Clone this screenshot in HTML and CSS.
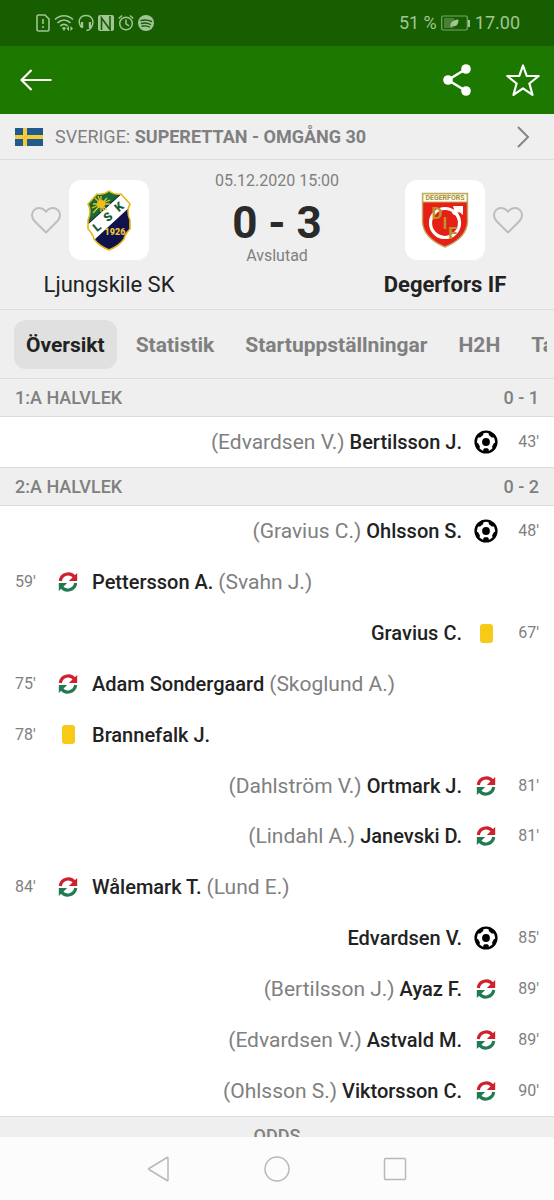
FILE: index.html
```html
<!DOCTYPE html>
<html lang="sv">
<head>
    <meta charset="UTF-8">
    <meta name="viewport" content="width=device-width, initial-scale=1.0">
    <title>Ljungskile SK - Degerfors IF</title>
    <link rel="stylesheet" href="styles.css">
</head>
<body>
    <!-- Shared icons -->
    <svg class="sprite" aria-hidden="true">
        <symbol id="ball" viewBox="0 0 24 24">
            <circle cx="12" cy="12" r="10.4" fill="#fff" stroke="#000" stroke-width="2.4"/>
            <circle cx="12" cy="12" r="3.900"/>
            <path d="M9 22.500l.3-3.300 1.200-1h3l1.200 1 .3 3.300z"/>
            <path d="M4.500 4.500L9.500 1.800 9.200 5 6.200 7.500 3 7.500zM19.500 4.500L14.500 1.800 14.800 5 17.800 7.500 21 7.500z"/>
            <path d="M1.500 12l2.600 1.200 1.800 3.400L5.400 19 2.500 17zM22.500 12l-2.600 1.200-1.800 3.400.5 2.400 2.900-2z"/>
        </symbol>
        <symbol id="swap" viewBox="0 0 24 24">
            <path d="M4.300 11A8 8 0 0 1 18.600 7.200" fill="none" stroke="#d0202e" stroke-width="3.200"/>
            <path d="M21.200 3v8h-8.400z" fill="#d0202e"/>
            <path d="M19.700 13A8 8 0 0 1 5.400 16.800" fill="none" stroke="#217a51" stroke-width="3.200"/>
            <path d="M2.800 21v-8h8.400z" fill="#217a51"/>
        </symbol>
        <symbol id="heart" viewBox="0 0 32 30">
            <path d="M16 27.500L4.700 16.300C1.200 12.600 1.200 8 4 5.100c3.400-3.400 8.700-2.800 12 1.600 3.300-4.400 8.600-5 12-1.600 2.800 2.900 2.800 7.500-.7 11.200z" fill="none" stroke="#bdbdbd" stroke-width="2" stroke-linejoin="round"/>
        </symbol>
    </svg>

    <div class="app">
        <div class="status-bar">
            <div class="status-icons">
                <svg width="14" height="18" viewBox="0 0 14 18"><path d="M1 2.500Q1 1 2.500 1H9l4 4v10.500q0 1.500-1.500 1.500h-9Q1 17 1 15.500zM7 5v5M7 12v2" fill="none" stroke="currentColor" stroke-width="1.600"/></svg>
                <svg width="20" height="18" viewBox="0 0 20 18"><path d="M1 5.500c5.200-5 12.800-5 18 0M3.500 8.800c4-3.600 9-3.600 13 0M6.300 12c2.300-2 5-2 7.400 0" fill="none" stroke="currentColor" stroke-width="1.700"/><path d="M8 14l2-1.200 2 1.200-2 3zM15 12v5l-2.500-2.500zM16.500 12v5l2.500-2.500z" fill="currentColor"/></svg>
                <svg width="16" height="18" viewBox="0 0 16 18"><path d="M3 13C-.8 7 2 1.500 8 1.500S16.800 7 13.500 13q-1.500 3-5 3.500" fill="none" stroke="currentColor" stroke-width="1.500"/><path d="M3 8h2.200v6H3zM10.800 8H13v6h-2.200z" fill="currentColor"/></svg>
                <svg width="16" height="18" viewBox="0 0 16 18"><rect y="1" width="16" height="16" rx="2" fill="currentColor"/><path d="M3.500 16V4l8.500 11.500V2" fill="none" stroke="#175e00" stroke-width="1.600"/></svg>
                <svg width="16" height="18" viewBox="0 0 16 18"><circle cx="8" cy="9.500" r="6.300" fill="none" stroke="currentColor" stroke-width="1.500"/><path d="M8 5.500v4.300l3 2M.7 4.500L4 1.500M15.300 4.500L12 1.500" fill="none" stroke="currentColor" stroke-width="1.500"/></svg>
                <svg width="16" height="18" viewBox="0 0 16 18"><circle cx="8" cy="9" r="8" fill="currentColor"/><path d="M3 6.500q5.500-1.500 10.500 1M3.500 9.500q5-1.300 9 1M4 12.200q4-1 7.500.8" fill="none" stroke="#175e00" stroke-width="1.400" stroke-linecap="round"/></svg>
            </div>
            <div class="status-info">
                <span>51 %</span>
                <svg width="30" height="16" viewBox="0 0 30 16"><rect x=".7" y="1" width="25.600" height="14" rx="1.500" fill="none" stroke="currentColor" stroke-width="1.200" opacity=".7"/><path d="M3 3h10v10H3z" fill="currentColor" opacity=".35"/><path d="M9.500 12c-.5-4.500 2-7 8-7.500 0 5.500-2.500 7.500-6 6.300L10.500 12z" fill="currentColor"/><path d="M28 5v7" stroke="currentColor" stroke-width="2"/></svg>
                <span>17.00</span>
            </div>
        </div>

        <header class="app-bar">
            <button class="icon-button" aria-label="Tillbaka">
                <svg width="32" height="24" viewBox="0 0 32 24"><path d="M31.500 12H2M11.500 2L1.500 12l10 10" fill="none" stroke="#fff" stroke-width="2.200"/></svg>
            </button>
            <div class="app-actions">
                <button class="icon-button" aria-label="Dela">
                    <svg width="30" height="34" viewBox="0 0 30 34"><path d="M24 6L6 17l18 11" fill="none" stroke="#fff" stroke-width="2.600"/><circle cx="24" cy="6" r="4.800" fill="#fff"/><circle cx="6" cy="17" r="4.800" fill="#fff"/><circle cx="24" cy="28" r="4.800" fill="#fff"/></svg>
                </button>
                <button class="icon-button" aria-label="Favorit">
                    <svg width="34" height="34" viewBox="0 0 34 34"><path d="M17 2.500l3.700 10.300 12 .2-9.300 7.500 3.100 11.300L17 25.300l-9.500 6.500 3.100-11.300L1.300 13l12-.2z" fill="none" stroke="#fff" stroke-width="2.200" stroke-linejoin="round"/></svg>
                </button>
            </div>
        </header>

        <main class="content">
            <a class="league" href="#">
                <svg class="flag" width="28" height="18" viewBox="0 0 28 18"><path d="M0 0h28v18H0z" fill="#215a8c"/><path d="M8 0h4v18H8zM0 7h28v4H0z" fill="#f5cb3a"/></svg>
                <span class="league-name">SVERIGE: <b>SUPERETTAN - OMGÅNG 30</b></span>
                <svg width="14" height="22" viewBox="0 0 14 22"><path d="M2 1l10 10L2 21" fill="none" stroke="#858585" stroke-width="2"/></svg>
            </a>

            <section class="match">
                <div class="team">
                    <div class="team-logo">
                        <button class="icon-button" aria-label="Följ Ljungskile SK"><svg width="32" height="30"><use href="#heart"/></svg></button>
                        <div class="crest">
                            <svg width="80" height="80" viewBox="0 0 80 80">
                                <defs><clipPath id="shield"><path d="M40 11q5 4 12 3l9 10q-4 7 0 16v9q-5 5-6 10-5 7-15 11-10-4-15-11-1-5-6-10v-9q4-9 0-16l9-10q7 1 12-3z"/></clipPath></defs>
                                <g clip-path="url(#shield)">
                                    <path d="M15 8h50v62H15z" fill="#10124c"/>
                                    <path d="M15 8h43L15 47z" fill="#176a34"/>
                                    <path d="M15 48L57 10l8 13L24 61z" fill="#fff"/>
                                </g>
                                <path d="M40 11q5 4 12 3l9 10q-4 7 0 16v9q-5 5-6 10-5 7-15 11-10-4-15-11-1-5-6-10v-9q4-9 0-16l9-10q7 1 12-3z" fill="none" stroke="#e5b817" stroke-width="1.600"/>
                                <path d="M32 16v16M24 24h17M26 18l12 12M38 18L24 33M29 16l6 15M41 20l-18 8" stroke="#e8c52a" stroke-width="1.300"/>
                                <circle cx="32" cy="24" r="4" fill="#f2bd18"/>
                                <g class="crest-letters" fill="#175c36" text-anchor="middle">
                                    <text x="28" y="51" transform="rotate(-40 28 47)">L</text>
                                    <text x="39" y="41" transform="rotate(-40 39 37)">S</text>
                                    <text x="50" y="31" transform="rotate(-40 50 27)">K</text>
                                </g>
                                <text class="crest-year" x="46" y="55" fill="#edc83c" text-anchor="middle">1926</text>
                            </svg>
                        </div>
                    </div>
                    <div class="team-name">Ljungskile SK</div>
                </div>

                <div class="result">
                    <div class="result-date">05.12.2020 15:00</div>
                    <div class="result-score">0 - 3</div>
                    <div class="result-status">Avslutad</div>
                </div>

                <div class="team team-away">
                    <div class="team-logo">
                        <div class="crest">
                            <svg width="80" height="80" viewBox="0 0 80 80">
                                <path d="M17.500 13.500h45V42q-1 16-22.500 25Q18.500 58 17.500 42z" fill="#e62016" stroke="#bda85d" stroke-width="1.400"/>
                                <path d="M18 14h44v8H18z" fill="#fffef2" stroke="#c6b367"/>
                                <text class="crest-label" x="40" y="20" fill="#a78e37" text-anchor="middle">DEGERFORS</text>
                                <circle cx="40" cy="43" r="14.500" fill="none" stroke="#fff" stroke-width="3.200"/>
                                <path d="M48 34l6-6" stroke="#fff" stroke-width="3.600"/>
                                <path d="M48 26h10v9l-3-2.500h-5z" fill="#fff"/>
                                <g class="crest-monogram" fill="#bb932e" text-anchor="middle">
                                    <text x="32" y="39">D</text>
                                    <text x="40" y="49">I</text>
                                    <text x="48" y="59">F</text>
                                </g>
                            </svg>
                        </div>
                        <button class="icon-button" aria-label="Följ Degerfors IF"><svg width="32" height="30"><use href="#heart"/></svg></button>
                    </div>
                    <div class="team-name winner">Degerfors IF</div>
                </div>
            </section>

            <nav class="tabs">
                <div class="tabs-track">
                    <button class="tab active">Översikt</button>
                    <button class="tab">Statistik</button>
                    <button class="tab">Startuppställningar</button>
                    <button class="tab">H2H</button>
                    <button class="tab">Tabell</button>
                </div>
            </nav>

            <h2 class="period"><span>1:A HALVLEK</span><span>0 - 1</span></h2>
            <ul class="events events-first">
                <li class="event away"><span class="time">43'</span><svg class="event-icon"><use href="#ball"/></svg><span class="names"><span class="other">(Edvardsen V.)</span> Bertilsson J.</span></li>
            </ul>

            <h2 class="period"><span>2:A HALVLEK</span><span>0 - 2</span></h2>
            <ul class="events events-fill">
                <li class="event away"><span class="time">48'</span><svg class="event-icon"><use href="#ball"/></svg><span class="names"><span class="other">(Gravius C.)</span> Ohlsson S.</span></li>
                <li class="event"><span class="time">59'</span><svg class="event-icon"><use href="#swap"/></svg><span class="names">Pettersson A. <span class="other">(Svahn J.)</span></span></li>
                <li class="event away"><span class="time">67'</span><span class="event-icon"><i class="yellow-card"></i></span><span class="names">Gravius C.</span></li>
                <li class="event"><span class="time">75'</span><svg class="event-icon"><use href="#swap"/></svg><span class="names">Adam Sondergaard <span class="other">(Skoglund A.)</span></span></li>
                <li class="event"><span class="time">78'</span><span class="event-icon"><i class="yellow-card"></i></span><span class="names">Brannefalk J.</span></li>
                <li class="event away"><span class="time">81'</span><svg class="event-icon"><use href="#swap"/></svg><span class="names"><span class="other">(Dahlström V.)</span> Ortmark J.</span></li>
                <li class="event away"><span class="time">81'</span><svg class="event-icon"><use href="#swap"/></svg><span class="names"><span class="other">(Lindahl A.)</span> Janevski D.</span></li>
                <li class="event"><span class="time">84'</span><svg class="event-icon"><use href="#swap"/></svg><span class="names">Wålemark T. <span class="other">(Lund E.)</span></span></li>
                <li class="event away"><span class="time">85'</span><svg class="event-icon"><use href="#ball"/></svg><span class="names">Edvardsen V.</span></li>
                <li class="event away"><span class="time">89'</span><svg class="event-icon"><use href="#swap"/></svg><span class="names"><span class="other">(Bertilsson J.)</span> Ayaz F.</span></li>
                <li class="event away"><span class="time">89'</span><svg class="event-icon"><use href="#swap"/></svg><span class="names"><span class="other">(Edvardsen V.)</span> Astvald M.</span></li>
                <li class="event away"><span class="time">90'</span><svg class="event-icon"><use href="#swap"/></svg><span class="names"><span class="other">(Ohlsson S.)</span> Viktorsson C.</span></li>
            </ul>

            <h2 class="odds">ODDS</h2>
        </main>

        <nav class="system-nav">
            <button class="icon-button" aria-label="Bakåt"><svg width="28" height="28" viewBox="0 0 28 28"><path d="M23 3v22q0 1-1 .5L4 14.500q-.8-.5 0-1l18-11q1-.5 1 .5z" fill="none" stroke="#b8b8b8" stroke-width="1.500"/></svg></button>
            <button class="icon-button" aria-label="Hem"><svg width="28" height="28" viewBox="0 0 28 28"><circle cx="14" cy="14" r="12" fill="none" stroke="#b8b8b8" stroke-width="1.500"/></svg></button>
            <button class="icon-button" aria-label="Senaste appar"><svg width="28" height="28" viewBox="0 0 28 28"><rect x="3.500" y="3.500" width="21" height="21" rx="1" fill="none" stroke="#b8b8b8" stroke-width="1.500"/></svg></button>
        </nav>
    </div>
</body>
</html>
```
FILE: styles.css
```css
* {
    box-sizing: border-box;
}
body {
    margin: 0;
    font-family: Roboto, "Liberation Sans", sans-serif;
    font-size: 20px;
    line-height: 24px;
    color: #222;
    background-color: #fff;
}
button {
    font: inherit;
    color: inherit;
    background: none;
    border: none;
    padding: 0;
    cursor: pointer;
}
svg {
    display: block;
}
.sprite {
    display: none;
}
.app {
    display: flex;
    flex-direction: column;
    height: 100vh;
}
.icon-button {
    flex-shrink: 0;
}

/* Top bars */
.status-bar {
    display: flex;
    justify-content: space-between;
    align-items: center;
    padding: 11px 34px 11px 36px;
    background-color: #175e00;
    color: #a3c497;
    font-size: 18px;
}
.status-icons {
    display: flex;
    gap: 4px;
}
.status-info {
    display: flex;
    align-items: center;
    gap: 4px;
}
.app-bar {
    display: flex;
    justify-content: space-between;
    align-items: center;
    padding: 17px 14px 17px 20px;
    background-color: #1d7800;
}
.app-actions {
    display: flex;
    gap: 34px;
}

.content {
    flex: 1;
    min-height: 0;
    display: flex;
    flex-direction: column;
    overflow-y: auto;
}
.league {
    display: flex;
    align-items: center;
    gap: 12px;
    padding: 11px 24px 10px 15px;
    background-color: #efefef;
    border-bottom: 1px solid #dcdcdc;
    color: #808080;
    font-size: 18px;
    text-decoration: none;
}
.league-name {
    flex: 1;
}

/* Teams and score */
.match {
    display: flex;
    justify-content: space-between;
    padding: 8px 30px 12px;
    background-color: #efefef;
    border-bottom: 1px solid #dcdcdc;
}
.team {
    padding-top: 12px;
    width: 158px;
}
.team-logo {
    display: flex;
    align-items: center;
    gap: 7px;
}
.team-away .team-logo {
    justify-content: flex-end;
}
.crest {
    background-color: #fff;
    border-radius: 12px;
}
.crest-letters {
    font-size: 12px;
    font-weight: 900;
}
.crest-year {
    font-size: 9px;
    font-weight: 900;
}
.crest-label {
    font-size: 7px;
    font-weight: 700;
}
.crest-monogram {
    font-size: 17px;
    font-weight: 700;
}
.team-name {
    margin-top: 13px;
    font-size: 22px;
    text-align: center;
}
.winner {
    font-weight: 700;
}
.result {
    padding-top: 1px;
    color: #808080;
    font-size: 16px;
    text-align: center;
    white-space: nowrap;
}
.result-score {
    margin-top: 9px;
    color: #2a2a2a;
    font-size: 44px;
    font-weight: 700;
    line-height: 42px;
}

/* Tabs */
.tabs {
    padding: 10px 7px 9px 14px;
    background-color: #efefef;
    border-bottom: 1px solid #dcdcdc;
}
.tabs-track {
    display: flex;
    gap: 7px;
    overflow: hidden;
}
.tab {
    flex-shrink: 0;
    padding: 13px 12px 12px;
    border-radius: 12px;
    color: #808080;
    font-size: 21px;
    font-weight: 700;
}
.tab.active {
    background-color: #e0e0e0;
    color: #222;
}

/* Match events */
.period {
    display: flex;
    justify-content: space-between;
    margin: 0;
    padding: 7px 15px 6px;
    background-color: #efefef;
    border-bottom: 1px solid #dcdcdc;
    color: #808080;
    font-size: 18px;
    font-weight: 500;
}
.events {
    display: flex;
    flex-direction: column;
    margin: 0;
    padding: 0;
    list-style: none;
}
.events-first {
    border-bottom: 1px solid #dcdcdc;
}
.events-fill {
    flex: 1;
}
.event {
    flex: 1;
    display: flex;
    align-items: center;
    padding: 13px 15px;
}
.event.away {
    flex-direction: row-reverse;
}
.time {
    width: 41px;
    color: #808080;
    font-size: 16px;
}
.away .time {
    text-align: right;
}
.event-icon {
    display: flex;
    justify-content: center;
    align-items: center;
    width: 24px;
    height: 24px;
}
.yellow-card {
    width: 13px;
    height: 19px;
    border-radius: 3px;
    background-color: #f7ca18;
}
.names {
    margin: 0 12px;
    font-weight: 500;
}
.other {
    color: #808080;
    font-size: 21px;
    font-weight: 400;
}
.odds {
    height: 21px;
    margin: 0;
    padding-top: 7px;
    overflow: hidden;
    background-color: #efefef;
    border-top: 1px solid #dcdcdc;
    color: #808080;
    font-size: 18px;
    font-weight: 500;
    text-align: center;
}

.system-nav {
    display: flex;
    justify-content: center;
    gap: 90px;
    padding: 18px 0 17px;
    background-color: #fcfcfc;
}
```
